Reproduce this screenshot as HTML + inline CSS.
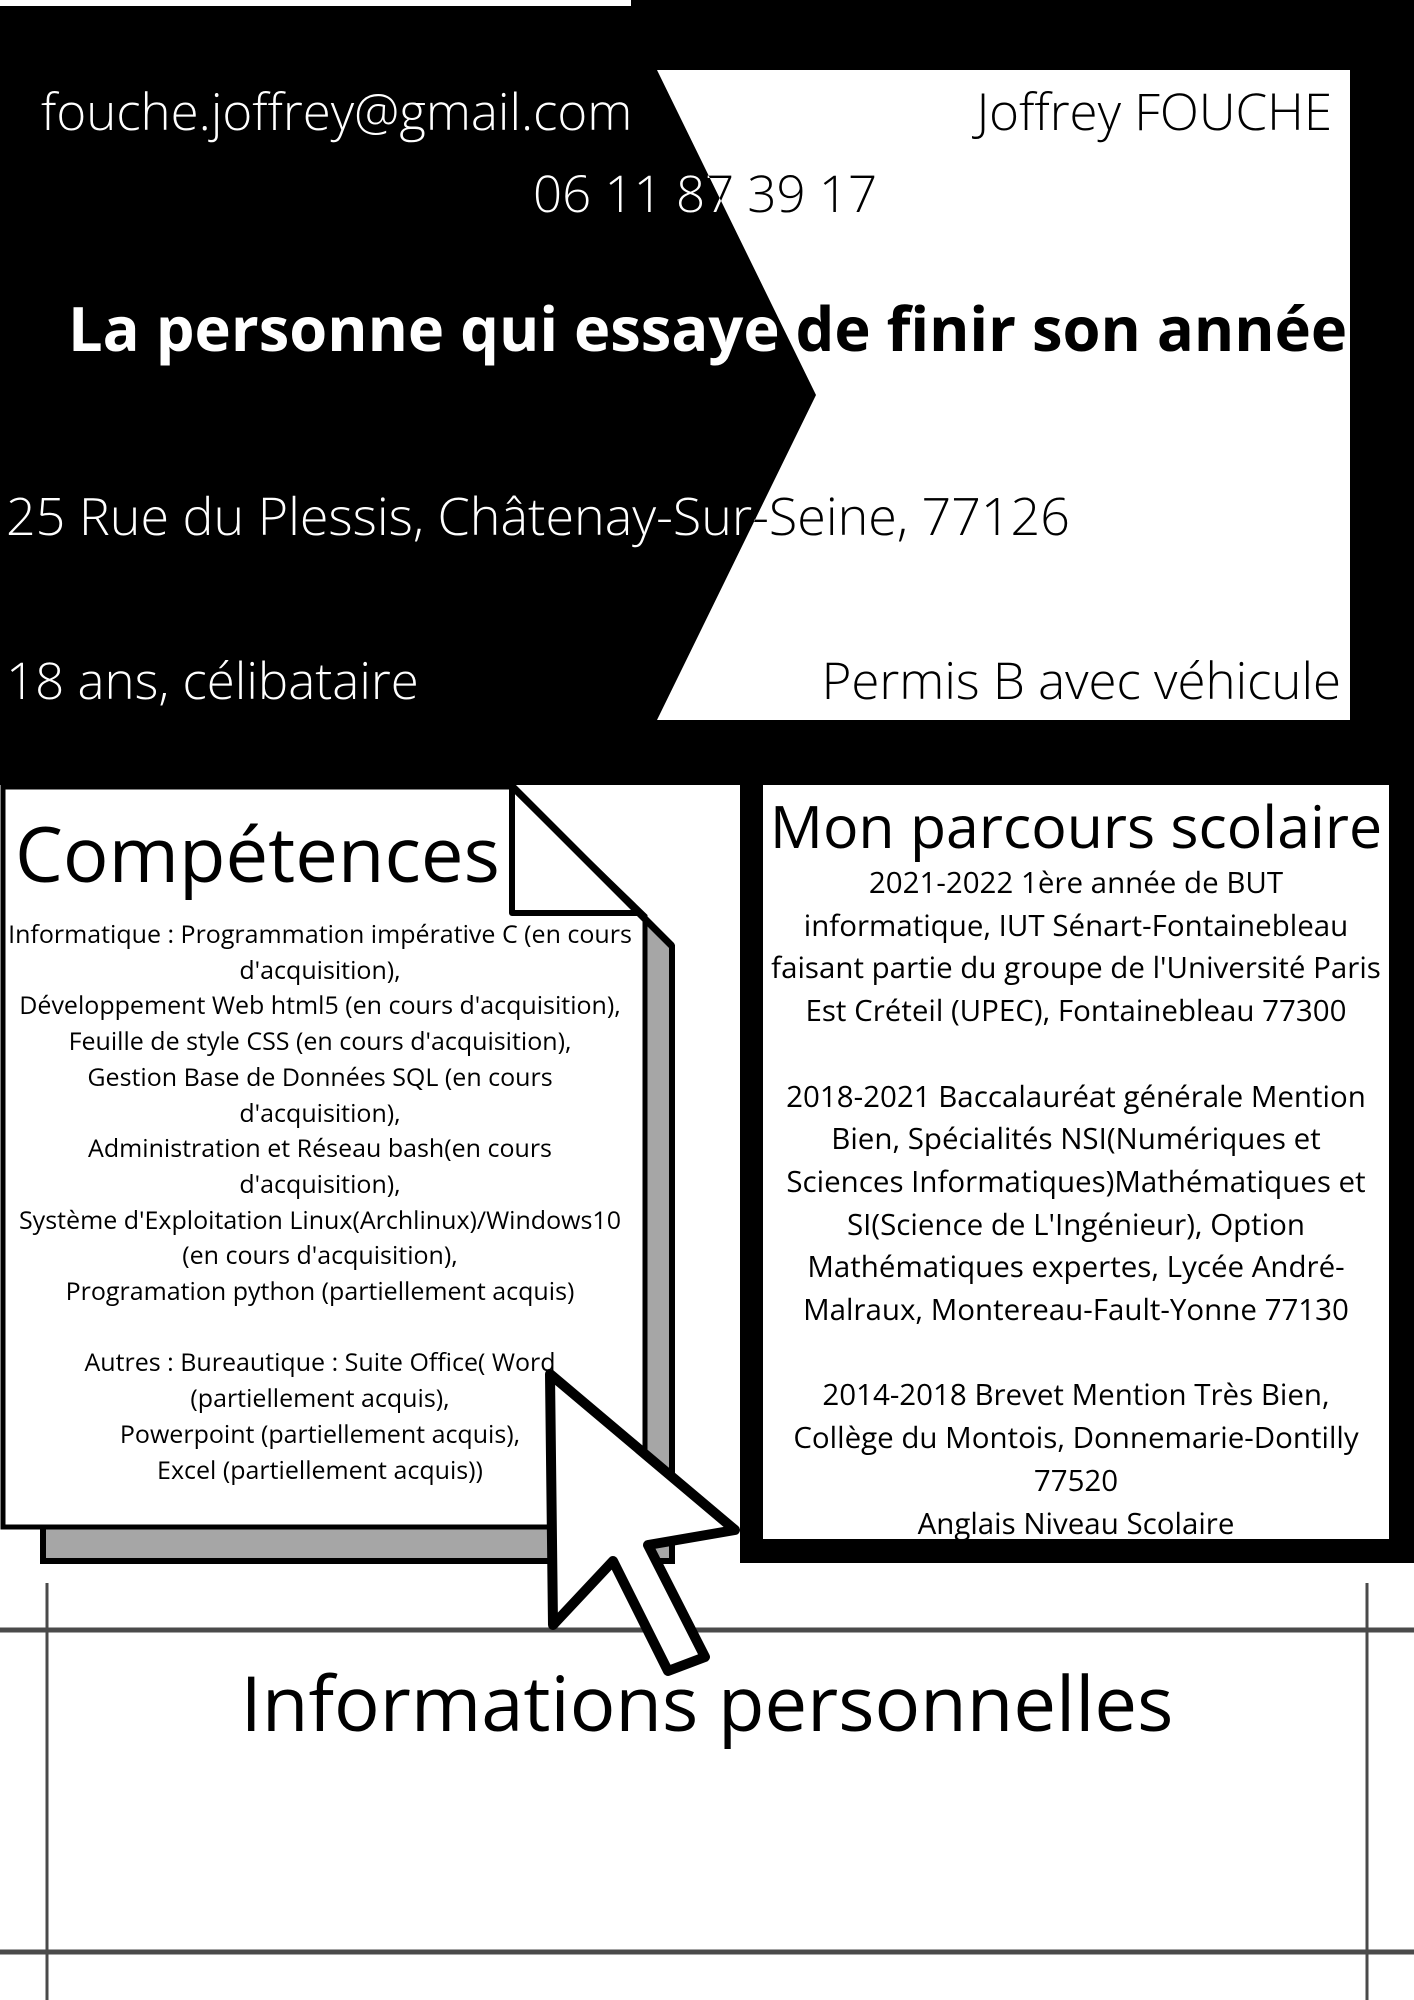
<!DOCTYPE html>
<html><head><meta charset="utf-8">
<style>
html,body{margin:0;padding:0;background:#fff;}
body{width:1414px;height:2000px;position:relative;overflow:hidden;font-family:"Open Sans","Liberation Sans",sans-serif;color:#000;}
.hdr{position:absolute;left:0;top:0;width:1414px;height:790px;isolation:isolate;}
.t{position:absolute;white-space:nowrap;line-height:1;color:#fff;mix-blend-mode:difference;font-weight:300;}
.a{position:absolute;white-space:nowrap;line-height:1;}
.c{position:absolute;text-align:center;white-space:nowrap;}
</style></head><body>
<svg width="1414" height="2000" style="position:absolute;left:0;top:0">
  <rect x="0" y="6" width="1414" height="779" fill="#000"/>
  <rect x="631" y="0" width="783" height="10" fill="#000"/>
  <rect x="740" y="780" width="674" height="783" fill="#000"/>
  <rect x="763" y="785" width="626" height="754" fill="#fff"/>
  <polygon points="43,822 548,822 672,946 672,1561 43,1561" fill="#a6a6a6" stroke="#000" stroke-width="6"/>
  <polygon points="3,787 512,787 645,916 645,1527 3,1527" fill="#fff" stroke="#000" stroke-width="5"/>
  <polygon points="512,787 512,913 640,913" fill="#fff" stroke="#000" stroke-width="6" stroke-linejoin="round"/>
  <line x1="512" y1="786" x2="672" y2="946" stroke="#000" stroke-width="7"/>
  <line x1="0" y1="1630" x2="1414" y2="1630" stroke="#4a4a4a" stroke-width="5"/>
  <line x1="0" y1="1952" x2="1414" y2="1952" stroke="#4a4a4a" stroke-width="5"/>
  <line x1="47" y1="1583" x2="47" y2="2000" stroke="#4a4a4a" stroke-width="3"/>
  <line x1="1367" y1="1583" x2="1367" y2="2000" stroke="#4a4a4a" stroke-width="3"/>
</svg>
<div class="hdr">
  <svg width="1414" height="785" style="position:absolute;left:0;top:0">
    <rect x="0" y="6" width="1414" height="779" fill="#000"/>
    <rect x="631" y="0" width="783" height="10" fill="#000"/>
    <polygon points="657,70 1350,70 1350,720 657,720 816,395" fill="#fff"/>
  </svg>
  <div class="t" style="left:41px;top:85px;font-size:51px;">fouche.joffrey@gmail.com</div>
  <div class="t" style="right:82px;top:85px;font-size:51px;">Joffrey FOUCHE</div>
  <div class="t" style="left:533px;top:167px;font-size:51px;">06 11 87 39 17</div>
  <div class="t" style="left:68px;top:297px;font-size:61.4px;font-weight:bold;">La personne qui essaye de finir son année</div>
  <div class="t" style="left:6px;top:490px;font-size:52px;">25 Rue du Plessis, Châtenay-Sur-Seine, 77126</div>
  <div class="t" style="left:6px;top:654px;font-size:51px;">18 ans, célibataire</div>
  <div class="t" style="right:73px;top:654px;font-size:51px;">Permis B avec véhicule</div>
</div>
<div class="a" style="left:15px;top:816px;font-size:76px;">Compétences</div>
<div class="c" style="left:0;top:917px;width:640px;font-size:25px;line-height:35.7px;">Informatique : Programmation impérative C (en cours<br>d'acquisition),<br>Développement Web html5 (en cours d'acquisition),<br>Feuille de style CSS (en cours d'acquisition),<br>Gestion Base de Données SQL (en cours<br>d'acquisition),<br>Administration et Réseau bash(en cours<br>d'acquisition),<br>Système d'Exploitation Linux(Archlinux)/Windows10<br>(en cours d'acquisition),<br>Programation python (partiellement acquis)<br><br>Autres : Bureautique : Suite Office( Word<br>(partiellement acquis),<br>Powerpoint (partiellement acquis),<br>Excel (partiellement acquis))</div>
<div class="c" style="left:763px;top:797px;width:626px;font-size:59px;line-height:1;">Mon parcours scolaire</div>
<div class="c" style="left:763px;top:861px;width:626px;font-size:29.5px;line-height:42.7px;">2021-2022 1ère année de BUT<br>informatique, IUT Sénart-Fontainebleau<br>faisant partie du groupe de l'Université Paris<br>Est Créteil (UPEC), Fontainebleau 77300<br><br>2018-2021 Baccalauréat générale Mention<br>Bien, Spécialités NSI(Numériques et<br>Sciences Informatiques)Mathématiques et<br>SI(Science de L'Ingénieur), Option<br>Mathématiques expertes, Lycée André-<br>Malraux, Montereau-Fault-Yonne 77130<br><br>2014-2018 Brevet Mention Très Bien,<br>Collège du Montois, Donnemarie-Dontilly<br>77520<br>Anglais Niveau Scolaire</div>
<div class="c" style="left:0;top:1665px;width:1414px;font-size:76px;line-height:1;">Informations personnelles</div>
<svg width="1414" height="2000" style="position:absolute;left:0;top:0">
  <polygon points="550,1374 735,1530 648,1545 705,1657 668,1671 613,1561 553,1625" fill="#fff" stroke="#000" stroke-width="10" stroke-linejoin="round"/>
</svg>
</body></html>
